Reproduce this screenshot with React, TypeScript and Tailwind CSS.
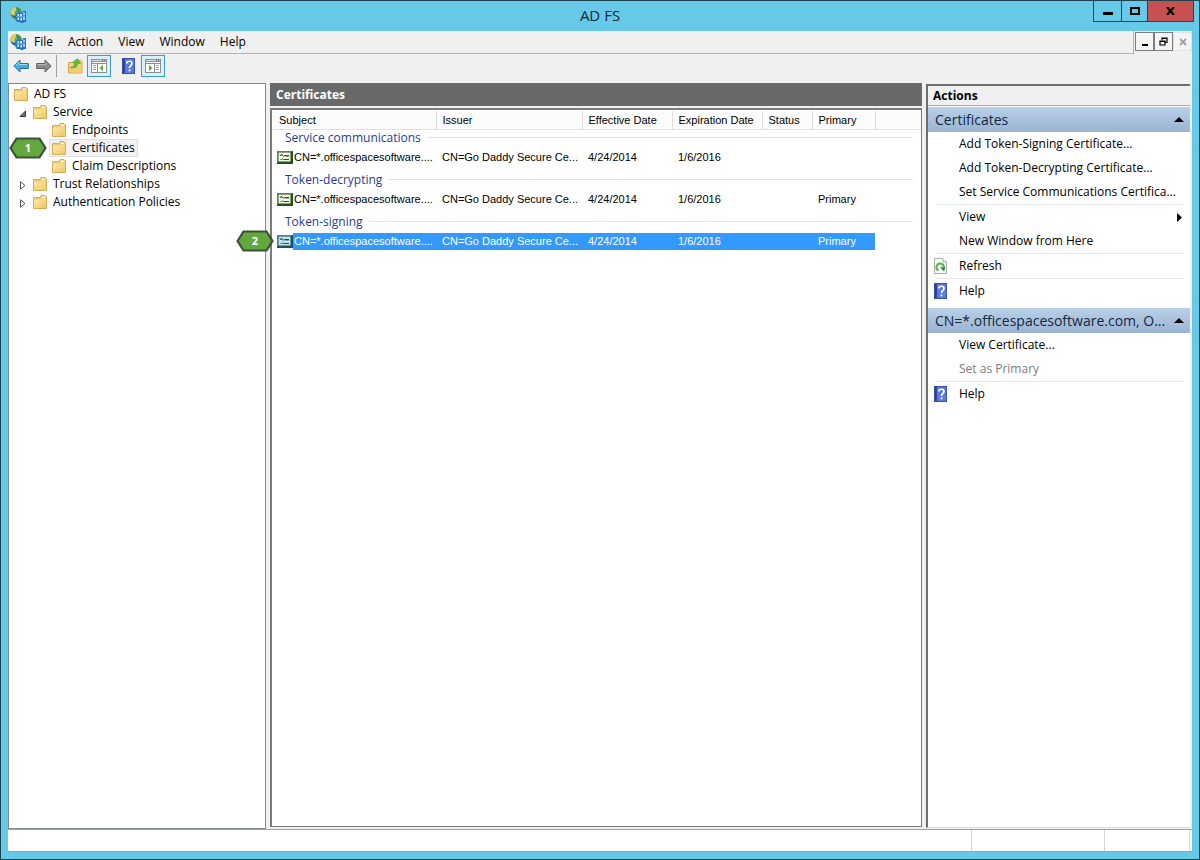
import { useState } from "react";

type TreeNode = {
  label: string;
  depth: 0 | 1 | 2;
  state?: "open" | "closed";
};

type CertificateRow = {
  group: string;
  subject: string;
  issuer: string;
  effective: string;
  expiration: string;
  status: string;
  primary: string;
};

const menu_items = ["File", "Action", "View", "Window", "Help"];

const tree_nodes: TreeNode[] = [
  { label: "AD FS", depth: 0 },
  { label: "Service", depth: 1, state: "open" },
  { label: "Endpoints", depth: 2 },
  { label: "Certificates", depth: 2 },
  { label: "Claim Descriptions", depth: 2 },
  { label: "Trust Relationships", depth: 1, state: "closed" },
  { label: "Authentication Policies", depth: 1, state: "closed" },
];

const columns = ["Subject", "Issuer", "Effective Date", "Expiration Date", "Status", "Primary"];

const certificates: CertificateRow[] = [
  {
    group: "Service communications",
    subject: "CN=*.officespacesoftware....",
    issuer: "CN=Go Daddy Secure Ce...",
    effective: "4/24/2014",
    expiration: "1/6/2016",
    status: "",
    primary: "",
  },
  {
    group: "Token-decrypting",
    subject: "CN=*.officespacesoftware....",
    issuer: "CN=Go Daddy Secure Ce...",
    effective: "4/24/2014",
    expiration: "1/6/2016",
    status: "",
    primary: "Primary",
  },
  {
    group: "Token-signing",
    subject: "CN=*.officespacesoftware....",
    issuer: "CN=Go Daddy Secure Ce...",
    effective: "4/24/2014",
    expiration: "1/6/2016",
    status: "",
    primary: "Primary",
  },
];

function AdfsIcon() {
  return (
    <svg viewBox="0 0 16 16" className="h-4 w-4 shrink-0">
      <circle cx="6" cy="6" r="5.800" fill="#4a9fc4" />
      <path d="M.4 5C1 2 3.500.3 6 .2L6.500 3 4.500 5 5 8 3 8.500 1 7.500Z" fill="#e3cf45" />
      <path d="M6 .2C9 .2 11.500 2.500 11.700 5L8 5.500 6.500 3Z" fill="#4d9a3a" />
      <path d="M1 7.500l2 1 2.500.5 1 2.800C4 11.800 1.800 10 1 7.500Z" fill="#2d6f5f" />
      <path d="M5.500 6.500h2v-1h5.500V4H16v11h-2.500v1h-3v-1H6.500v-1.500h-1Z" fill="#2372c8" />
      <path d="M7.500 7h1.500v2H7.500zM10 7h2v2.500h-2zM13.300 5.500h1.400v3h-1.400zM7.500 10.500h1.500V13H7.500zM10.500 11h1.500v2.500h-1.500zM13.300 10h1.400v3h-1.400z" fill="#d6efff" />
      <path d="M6 9.800h9" stroke="#7fc6f5" strokeWidth=".7" />
    </svg>
  );
}

function FolderIcon() {
  return (
    <svg viewBox="0 0 14 14" className="h-3.5 w-3.5 shrink-0">
      <defs>
        <linearGradient id="folder" x1="0" y1="0" x2="1" y2="1">
          <stop offset="0" stopColor="#fdeaa9" />
          <stop offset="1" stopColor="#edc768" />
        </linearGradient>
      </defs>
      <path d="M.5 2.500h6.500l1-2h4l1.500 1.500V13.500H.5Z" fill="#ecca78" stroke="#d3ad58" />
      <path d="M9 1.500h3v1.500H8.300Z" fill="#fff8dc" />
      <path d="M1 4.500h6.500l1-1H13V13H1Z" fill="url(#folder)" />
    </svg>
  );
}

function BackIcon() {
  return (
    <svg viewBox="0 0 16 14" className="h-3.5 w-4">
      <path d="M.8 7 7 1v3.500h8.300v5H7V13Z" fill="#41aeea" stroke="#2a6f9f" strokeLinejoin="round" />
      <path d="M2.500 6.800 6 3.400v2.100h8" fill="none" stroke="#9cdcfa" />
    </svg>
  );
}

function ForwardIcon() {
  return (
    <svg viewBox="0 0 16 14" className="h-3.5 w-4">
      <path d="M15.200 7 9 1v3.500H.7v5H9V13Z" fill="#8c8c8c" stroke="#5f5f5f" strokeLinejoin="round" />
      <path d="M1.500 5.500H10V3.400" fill="none" stroke="#b5b5b5" />
    </svg>
  );
}

function UpFolderIcon() {
  return (
    <svg viewBox="0 0 15 16" className="h-4 w-[15px]">
      <path d="M.5 4.500H6l1.500-2H13l1 1v11.500H.5Z" fill="#f3d680" stroke="#d0a94f" />
      <path d="M1 8h12.500v6.500H1Z" fill="#f0cd74" />
      <path d="M2.500 9.500C5.500 9 6.500 7.500 6.800 5L4.500 4.500 9.500.8l3 4.700-2.500-.3C9.500 9 7 10.500 2.500 9.500Z" fill="#62bd3c" stroke="#45942a" strokeWidth=".6" />
    </svg>
  );
}

function PaneIcon({ side }: { side: "left" | "right" }) {
  return (
    <svg viewBox="0 0 16 14" className="h-3.5 w-4" shapeRendering="crispEdges">
      <path d="M0 0h16v14H0Z" fill="#8b8f93" />
      <path d="M1 1h14v1H1Z" fill="#dfe3e6" />
      <path d="M11 1h1v1h-1zM13 1h1v1h-1z" fill="#5e6468" />
      <path d="M1 3h14v1H1Z" fill="#fff" />
      {side === "left" ? (
        <>
          <path d="M1 5h5v8H1ZM7 5h8v8H7Z" fill="#fff" />
          <path d="M2 6h3v1H2zM2 8h3v1H2zM2 10h3v1H2z" fill="#9aa0a5" />
          <path d="M12 6v6L8.500 9Z" fill="#54ad2b" shapeRendering="auto" />
        </>
      ) : (
        <>
          <path d="M1 5h8v8H1ZM10 5h5v8h-5Z" fill="#fff" />
          <path d="M11 6h3v1h-3zM11 8h3v1h-3zM11 10h3v1h-3z" fill="#9aa0a5" />
          <path d="M4 6v6l3.500-3Z" fill="#54ad2b" shapeRendering="auto" />
        </>
      )}
    </svg>
  );
}

function HelpIcon() {
  return (
    <svg viewBox="0 0 13 16" className="h-4 w-[13px]">
      <path d="M0 0h13v16H0Z" fill="#3552b0" />
      <path d="M3 1h9v14H3Z" fill="#5b7bd6" />
      <path d="M1 1h1.500v14H1Z" fill="#27408f" />
      <path d="M4.800 5.500C4.800 2.500 10 2.500 10 5.500 10 7.500 7.500 7.300 7.500 10" fill="none" stroke="#fff" strokeWidth="1.700" />
      <path d="M6.600 11.500h1.800v1.800H6.600Z" fill="#fff" />
    </svg>
  );
}

function RefreshIcon() {
  return (
    <svg viewBox="0 0 13 16" className="h-4 w-[13px]">
      <path d="M.5.5H9L12.500 4v11.500H.5Z" fill="#fbfcfa" stroke="#a9b0a6" />
      <path d="M9 .5V4h3.500" fill="#e6eae4" stroke="#a9b0a6" />
      <path d="M4.500 12.500A3.700 3.700 0 1 1 9.800 10" fill="none" stroke="#5cb552" strokeWidth="2" />
      <path d="M6 9.300h5.500L10 13.500Z" fill="#2f8c2c" />
    </svg>
  );
}

function CertificateIcon({ selected }: { selected: boolean }) {
  return (
    <svg viewBox="0 0 16 13" className="h-[13px] w-4 shrink-0">
      <path d="M0 0h16v13H0Z" fill={selected ? "#1f4f66" : "#1c541c"} />
      <path d="M0 0h15v1H1v11H0Z" fill={selected ? "#3f8a94" : "#3f9a35"} />
      <path d="M1.500 1.500h12v9h-12Z" fill={selected ? "#bfe6ee" : "#f7fbe0"} />
      <path d="M3 3.500l1 1.500M4.500 3l1 2M6.500 5.500l1-1.500M8 5.500l1-1.500 1 1.500 1-1.500 1 1.500" fill="none" stroke="#1b2c34" />
      <path d="M3.500 8.500h1l1-.7 1 .7H12" fill="none" stroke="#2a4a42" />
    </svg>
  );
}

function StepBadge({ value }: { value: string }) {
  return (
    <span className="flex h-[22px] w-[38px] items-center justify-center">
      <svg viewBox="0 0 38 22" className="absolute inset-0 h-full w-full">
        <path d="M1.500 11 7.500 1.500h23l6 9.500-6 9.500h-23Z" fill="#63a83f" stroke="#414f38" strokeWidth="2.200" />
      </svg>
      <span className="relative font-['Open_Sans',sans-serif] text-[11px] font-bold text-white">{value}</span>
    </span>
  );
}

function Expander({ state }: { state?: "open" | "closed" }) {
  return (
    <svg viewBox="0 0 8 9" className="mr-[3px] mt-0.5 h-[9px] w-2 shrink-0">
      {state === "open" ? <path d="M6.500 2v5.500H1Z" fill="#777" stroke="#333" /> : null}
      {state === "closed" ? <path d="M1.500.8v7.400L6 4.500Z" fill="#fff" stroke="#555" /> : null}
    </svg>
  );
}

function TreePane({ selected, on_select }: { selected: string; on_select: (label: string) => void }) {
  const indent = ["pl-[2px]", "pl-2.5", "pl-10"];

  return (
    <nav className="w-[258px] shrink-0 border border-[#828790] bg-white pt-px" aria-label="Console tree">
      <ul>
        {tree_nodes.map((node) => (
          <li key={node.label} className={`relative flex h-[18px] items-center ${indent[node.depth]}`}>
            {node.depth === 1 ? <Expander state={node.state} /> : null}
            <button
              type="button"
              onClick={() => on_select(node.label)}
              className={`flex h-[18px] items-center gap-1.5 border px-0.5 ${
                node.label === selected ? "border-[#dedede] bg-[#f2f2f2]" : "border-transparent"
              }`}
            >
              <FolderIcon />
              <span className="whitespace-nowrap">{node.label}</span>
            </button>
            {node.label === "Certificates" ? (
              <span className="absolute left-0 -top-0.5">
                <StepBadge value="1" />
              </span>
            ) : null}
          </li>
        ))}
      </ul>
    </nav>
  );
}

function CertificateTable() {
  const [selected, set_selected] = useState("Token-signing");

  return (
    <table className="w-full table-fixed border-collapse text-left font-['Liberation_Sans',Arial,sans-serif] text-[11px] leading-4">
      <colgroup>
        <col className="w-[163px]" />
        <col className="w-[146px]" />
        <col className="w-[90px]" />
        <col className="w-[90px]" />
        <col className="w-[50px]" />
        <col className="w-[63px]" />
        <col />
      </colgroup>
      <thead>
        <tr className="h-[18px] border-b border-[#e2e2e2] bg-[#fcfcfc]">
          {columns.map((column) => (
            <th key={column} className="border-r border-[#dedede] p-0 pl-1.5 font-normal whitespace-nowrap">
              {column}
            </th>
          ))}
          <th className="p-0" />
        </tr>
      </thead>
      {certificates.map((row, index) => {
        const is_selected = row.group === selected;
        const cell = is_selected ? "bg-[#3399ff] p-0 pl-1.5 text-white" : "p-0 pl-1.5";

        return (
          <tbody key={row.group} className="whitespace-nowrap">
            <tr>
              <th colSpan={7} className={`px-2 pb-[3px] font-normal ${index === 0 ? "pt-0" : "pt-1.5"}`}>
                <span className="flex items-center gap-1.5 pl-1 font-['Open_Sans','Noto_Sans',sans-serif] text-[12px] text-[#1e3a9c]">
                  {row.group}
                  <span className="h-px flex-1 bg-[#dfe5e8]" />
                </span>
              </th>
            </tr>
            <tr className="h-[17px]" onClick={() => set_selected(row.group)}>
              <td className="relative p-0 pl-1">
                <span className="flex h-[17px] items-center">
                  <CertificateIcon selected={is_selected} />
                  <span className={`flex h-[17px] flex-1 items-center pl-px ${is_selected ? "bg-[#3399ff] text-white" : ""}`}>
                    {row.subject}
                  </span>
                </span>
                {row.group === "Token-signing" ? (
                  <span className="absolute -left-[37px] -top-[3px]">
                    <StepBadge value="2" />
                  </span>
                ) : null}
              </td>
              <td className={cell}>{row.issuer}</td>
              <td className={cell}>{row.effective}</td>
              <td className={cell}>{row.expiration}</td>
              <td className={cell}>{row.status}</td>
              <td className={cell}>{row.primary}</td>
              <td />
            </tr>
          </tbody>
        );
      })}
    </table>
  );
}

function ActionHeading({ title }: { title: string }) {
  return (
    <h3 className="flex h-[25px] items-center justify-between bg-linear-to-b from-[#b9d0e8] to-[#9ab4d2] pl-[7px] pr-1.5 text-[14px] text-[#14283f]">
      <span>{title}</span>
      <svg viewBox="0 0 10 5" className="h-[5px] w-2.5">
        <path d="M5 0l5 5H0Z" fill="#000" />
      </svg>
    </h3>
  );
}

type ActionItemProps = {
  label: string;
  icon?: "help" | "refresh";
  has_submenu?: boolean;
  disabled?: boolean;
};

function ActionItem({ label, icon, has_submenu, disabled }: ActionItemProps) {
  return (
    <button
      type="button"
      disabled={disabled}
      className="flex h-6 w-full items-center pl-1.5 pr-2 text-left whitespace-nowrap disabled:text-[#7c7c7c]"
    >
      <span className="w-[25px] shrink-0">
        {icon === "help" ? <HelpIcon /> : null}
        {icon === "refresh" ? <RefreshIcon /> : null}
      </span>
      <span className="flex-1">{label}</span>
      {has_submenu ? (
        <svg viewBox="0 0 5 9" className="h-[9px] w-[5px]">
          <path d="M0 0l5 4.500L0 9Z" fill="#000" />
        </svg>
      ) : null}
    </button>
  );
}

function Divider() {
  return <hr className="ml-2 mr-1.5 border-[#e3e8ec]" />;
}

function ActionsPane() {
  return (
    <aside className="mt-px mb-px w-[264px] shrink-0 border-b border-l-2 border-t-2 border-b-[#dcdcdc] border-l-[#6e6e6e] border-t-[#6e6e6e] bg-white">
      <h2 className="flex h-5 items-center border-b border-[#a5a5a5] bg-[#f0f0f0] pl-[5px] font-bold">Actions</h2>
      <div className="pt-px">
        <ActionHeading title="Certificates" />
        <ActionItem label="Add Token-Signing Certificate..." />
        <ActionItem label="Add Token-Decrypting Certificate..." />
        <ActionItem label="Set Service Communications Certifica..." />
        <Divider />
        <ActionItem label="View" has_submenu />
        <ActionItem label="New Window from Here" />
        <Divider />
        <ActionItem label="Refresh" icon="refresh" />
        <Divider />
        <ActionItem label="Help" icon="help" />
      </div>
      <div className="pt-[5px]">
        <ActionHeading title="CN=*.officespacesoftware.com, O..." />
        <ActionItem label="View Certificate..." />
        <ActionItem label="Set as Primary" disabled />
        <Divider />
        <ActionItem label="Help" icon="help" />
      </div>
    </aside>
  );
}

function TitleBar() {
  return (
    <header className="relative flex h-[30px] items-center justify-center pb-0.5">
      <span className="absolute left-[9px] top-1.5">
        <AdfsIcon />
      </span>
      <h1 className="text-[15px] text-[#0d2a36]">AD FS</h1>
      <div className="absolute right-[5px] top-0 flex h-[21px] border border-t-0 border-[#1d4654]">
        <button type="button" aria-label="Minimize" className="flex w-7 items-center justify-center border-r border-[#1d4654]">
          <span className="mt-1 h-[3px] w-2.5 bg-black" />
        </button>
        <button type="button" aria-label="Maximize" className="flex w-[26px] items-center justify-center border-r border-[#1d4654]">
          <span className="h-2 w-2.5 border-2 border-black" />
        </button>
        <button type="button" aria-label="Close" className="flex w-[45px] items-center justify-center bg-[#c75050]">
          <svg viewBox="0 0 9 8" className="h-2 w-[9px]">
            <path d="M1 0l7 8M8 0L1 8" stroke="#000" strokeWidth="2.200" />
          </svg>
        </button>
      </div>
    </header>
  );
}

function MenuBar() {
  return (
    <div className="flex h-[23px]">
      <div className="flex flex-1 items-center border-b border-r border-[#b4b4b4] pl-0.5">
        <AdfsIcon />
        <nav className="flex gap-[15px] pl-2">
          {menu_items.map((item) => (
            <button key={item} type="button">
              {item}
            </button>
          ))}
        </nav>
      </div>
      <div className="flex w-[58px] items-start pl-px pt-px">
        <button type="button" aria-label="Minimize child window" className="flex h-[19px] w-[19px] items-end justify-center border border-[#7d7d7d] bg-[#f4f4f4] pb-1">
          <span className="h-0.5 w-1.5 bg-black" />
        </button>
        <button type="button" aria-label="Restore child window" className="flex h-[19px] w-[19px] items-center justify-center border border-[#7d7d7d] bg-[#f4f4f4]">
          <svg viewBox="0 0 9 9" className="h-[9px] w-[9px]">
            <path d="M3 3V1h5v4.500H6M3 1.500h5M1 4h5v4H1ZM1 4.500h5" fill="none" stroke="#000" strokeWidth="1.200" />
          </svg>
        </button>
        <button type="button" aria-label="Close child window" className="flex h-[19px] w-[19px] items-center justify-center border border-[#e2e2e2] bg-[#f4f4f4]">
          <svg viewBox="0 0 8 8" className="h-2 w-2">
            <path d="M1 1l6 6M7 1L1 7" stroke="#9a9fa5" strokeWidth="1.800" />
          </svg>
        </button>
      </div>
    </div>
  );
}

function ToolBar() {
  const toggle = "flex h-[22px] w-6 items-center justify-center border border-[#3c9bd6] bg-[#d9effb]";

  return (
    <div className="flex h-[29px] items-center pb-1.5 pl-[5px]">
      <button type="button" aria-label="Back" className="mr-[7px]">
        <BackIcon />
      </button>
      <button type="button" aria-label="Forward" className="mr-1">
        <ForwardIcon />
      </button>
      <span className="mr-[11px] h-[22px] w-px bg-[#a0a0a0]" />
      <button type="button" aria-label="Up one level" className="mr-1">
        <UpFolderIcon />
      </button>
      <button type="button" aria-label="Show or hide console tree" className={toggle}>
        <PaneIcon side="left" />
      </button>
      <button type="button" aria-label="Help" className="ml-[11px] mr-1.5">
        <HelpIcon />
      </button>
      <button type="button" aria-label="Show or hide action pane" className={toggle}>
        <PaneIcon side="right" />
      </button>
    </div>
  );
}

export default function App() {
  const [selected_node, set_selected_node] = useState("Certificates");

  return (
    <div className="flex min-h-screen flex-col border border-[#1f4450] bg-[#66c9e8] px-[7px] pb-[7px] font-['Open_Sans','Noto_Sans',sans-serif] text-[12px] leading-4 text-black">
      <div className="-mx-[7px]">
        <TitleBar />
      </div>
      <div className="flex flex-1 flex-col bg-[#f0f0f0]">
        <MenuBar />
        <ToolBar />
        <div className="flex flex-1 pr-0.5">
          <TreePane selected={selected_node} on_select={set_selected_node} />
          <main className="mx-1 flex min-w-0 flex-1 flex-col">
            <h2 className="flex h-[23px] items-center bg-[#696969] pl-1.5 font-bold text-white">Certificates</h2>
            <div className="mt-0.5 mb-0.5 flex-1 border-2 border-r border-b border-[#7b7b7b] bg-white pl-px pt-px">
              <CertificateTable />
            </div>
          </main>
          <ActionsPane />
        </div>
        <footer className="flex h-[23px] border-y border-[#a0a0a0] bg-white pr-0.5">
          <div className="flex-1" />
          <div className="w-[133px] border-l border-[#d4d4d4]" />
          <div className="w-[86px] border-x border-[#d4d4d4]" />
        </footer>
      </div>
    </div>
  );
}
